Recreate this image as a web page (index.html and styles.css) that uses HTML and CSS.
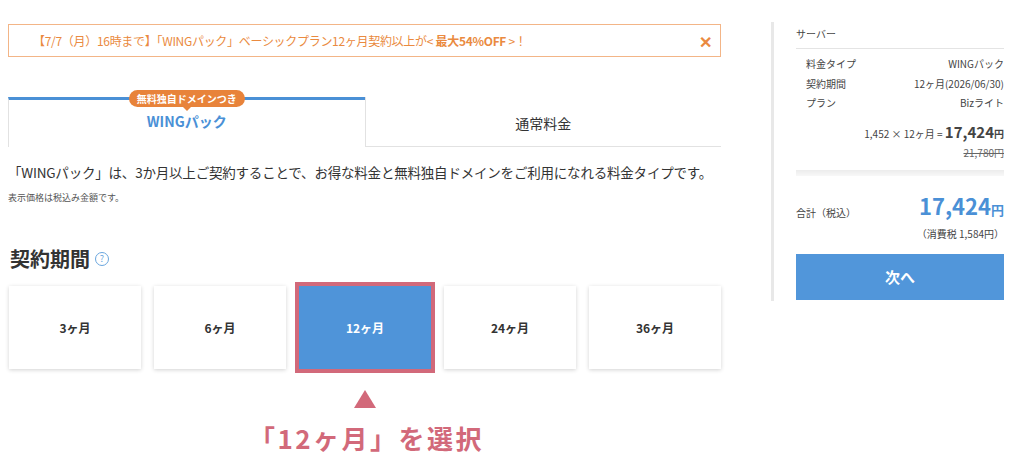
FILE: index.html
```html
<!DOCTYPE html>
<html lang="ja">
<head>
  <meta charset="UTF-8" />
  <title>料金タイプ選択</title>
  <link rel="stylesheet" href="styles.css">
</head>
<body>
  <div class="page">
    <div class="main">
      <div class="notice">
        <span class="notice-text">【7/7（月）16時まで】「WINGパック」ベーシックプラン12ヶ月契約以上が&lt; <b>最大54%OFF</b> &gt;！</span>
        <span class="notice-close">✕</span>
      </div>

      <div class="tabs">
        <div class="tab tab-active">
          <span class="badge">無料独自ドメインつき</span>
          WINGパック
        </div>
        <div class="tab">通常料金</div>
      </div>

      <p class="desc">「WINGパック」は、3か月以上ご契約することで、お得な料金と無料独自ドメインをご利用になれる料金タイプです。</p>
      <p class="note">表示価格は税込み金額です。</p>

      <h2 class="section-title">契約期間 <span class="help">?</span></h2>

      <div class="terms">
        <div class="term">3ヶ月</div>
        <div class="term">6ヶ月</div>
        <div class="term term-selected">12ヶ月</div>
        <div class="term">24ヶ月</div>
        <div class="term">36ヶ月</div>
      </div>

      <div class="pointer">
        <div class="pointer-arrow"></div>
        <div class="pointer-text">「12ヶ月」を選択</div>
      </div>
    </div>

    <div class="side">
      <div class="side-title">サーバー</div>
      <div class="side-rows">
        <div class="row"><span>料金タイプ</span><span>WINGパック</span></div>
        <div class="row"><span>契約期間</span><span>12ヶ月(2026/06/30)</span></div>
        <div class="row"><span>プラン</span><span>Bizライト</span></div>
      </div>
      <div class="calc">1,452 × 12ヶ月 = <b>17,424</b><small>円</small></div>
      <div class="old-price">21,780円</div>
      <div class="side-band"></div>
      <div class="total">
        <span class="total-label">合計（税込）</span>
        <span class="total-price">17,424<small>円</small></span>
      </div>
      <div class="tax">（消費税 1,584円）</div>
      <button class="next-btn">次へ</button>
    </div>
  </div>
</body>
</html>
```

FILE: styles.css
```css
body {
  margin: 0;
  font-family: "Noto Sans CJK JP", "Noto Sans", sans-serif;
  background-color: #fff;
  color: #333;
}

.page {
  display: flex;
  align-items: flex-start;
  padding-left: 8px;
}

.main {
  width: 713px;
  padding-top: 24px;
}

/* campaign notice */
.notice {
  display: flex;
  align-items: center;
  justify-content: space-between;
  height: 31px;
  border: 1px solid #f3b587;
  padding: 0 8px 0 24px;
  color: #ea8a40;
  font-size: 12px;
}

.notice-text {
  letter-spacing: -0.3px;
}

.notice b {
  font-weight: bold;
}

.notice-close {
  font-size: 16px;
  font-weight: bold;
  color: #ea8a40;
}

/* tabs */
.tabs {
  display: flex;
  margin-top: 40px;
}

.tab {
  position: relative;
  flex: 1;
  height: 46px;
  display: flex;
  align-items: center;
  justify-content: center;
  padding-top: 3px;
  font-size: 14px;
  color: #333;
  border-left: 1px solid #e2e2e2;
  border-bottom: 1px solid #e2e2e2;
}

.tab-active {
  border-top: 3px solid #4a90d6;
  border-bottom: none;
  padding-top: 0;
  padding-bottom: 5px;
  height: 42px;
  color: #4a90d6;
  font-weight: bold;
}

.badge {
  position: absolute;
  top: -10px;
  left: 50%;
  transform: translateX(-50%);
  background-color: #e8833a;
  color: #fff;
  font-size: 10px;
  font-weight: bold;
  line-height: 17px;
  padding: 0 8px;
  border-radius: 9px;
  white-space: nowrap;
}

.badge::after {
  content: "";
  position: absolute;
  left: 50%;
  bottom: -4px;
  margin-left: -4px;
  border-left: 4px solid transparent;
  border-right: 4px solid transparent;
  border-top: 4px solid #e8833a;
}

.desc {
  margin: 15px 0 0;
  font-size: 13.5px;
  line-height: 20px;
  letter-spacing: -0.2px;
  white-space: nowrap;
  color: #333;
}

.note {
  margin: 9px 0 0;
  font-size: 9px;
  color: #555;
}

.section-title {
  margin: 40px 0 0 2px;
  font-size: 20px;
  font-weight: bold;
  color: #333;
  display: flex;
  align-items: center;
  gap: 5px;
}

.help {
  width: 12px;
  height: 12px;
  border: 1px solid #6aa6de;
  border-radius: 50%;
  color: #6aa6de;
  font-size: 9px;
  line-height: 12px;
  text-align: center;
  font-weight: normal;
}

/* contract terms */
.terms {
  display: flex;
  justify-content: space-between;
  margin-top: 13px;
  padding-left: 1px;
}

.term {
  width: 132px;
  height: 83px;
  display: flex;
  align-items: center;
  justify-content: center;
  background-color: #fff;
  font-size: 12px;
  font-weight: bold;
  color: #333;
  box-shadow: 0 1px 4px rgba(0, 0, 0, 0.18);
}

.term-selected {
  background-color: #4f94d9;
  color: #fff;
  outline: 4px solid #d2697a;
  box-shadow: none;
}

.pointer {
  display: flex;
  flex-direction: column;
  align-items: center;
  margin-top: 21px;
}

.pointer-arrow {
  width: 0;
  height: 0;
  border-left: 11px solid transparent;
  border-right: 11px solid transparent;
  border-bottom: 18px solid #d2697a;
}

.pointer-text {
  margin-top: 11px;
  margin-left: 4px;
  font-size: 26px;
  font-weight: bold;
  color: #d2697a;
  letter-spacing: 2.5px;
}

/* side summary */
.side {
  margin-left: 50px;
  margin-top: 22px;
  width: 208px;
  padding: 4px 20px 0 22px;
  border-left: 3px solid #e8e8e8;
  height: 275px;
  font-size: 10px;
  color: #444;
}

.side-title {
  padding-bottom: 7px;
  border-bottom: 1px solid #e4e4e4;
}

.side-rows {
  padding: 5px 0 0 10px;
}

.row {
  display: flex;
  justify-content: space-between;
  line-height: 19.5px;
}

.calc {
  text-align: right;
  margin-top: 8px;
  font-size: 10px;
}

.calc b {
  font-size: 15px;
}

.calc small {
  font-size: 10px;
  font-weight: bold;
}

.old-price {
  text-align: right;
  margin-top: 3px;
  text-decoration: line-through;
  color: #666;
}

.side-band {
  height: 6px;
  margin-top: 10px;
  background: linear-gradient(#ececec, #f8f8f8);
}

.total {
  display: flex;
  justify-content: space-between;
  align-items: flex-end;
  margin-top: 16px;
}

.total-label {
  padding-bottom: 3px;
}

.total-price {
  font-size: 22px;
  font-weight: bold;
  color: #4a90d6;
  line-height: 26px;
}

.total-price small {
  font-size: 13px;
}

.tax {
  text-align: right;
  margin-top: 3px;
}

.next-btn {
  display: block;
  width: 100%;
  height: 46px;
  margin-top: 13px;
  border: none;
  background-color: #5196da;
  color: #fff;
  font-family: inherit;
  font-size: 15px;
  font-weight: bold;
}
```
